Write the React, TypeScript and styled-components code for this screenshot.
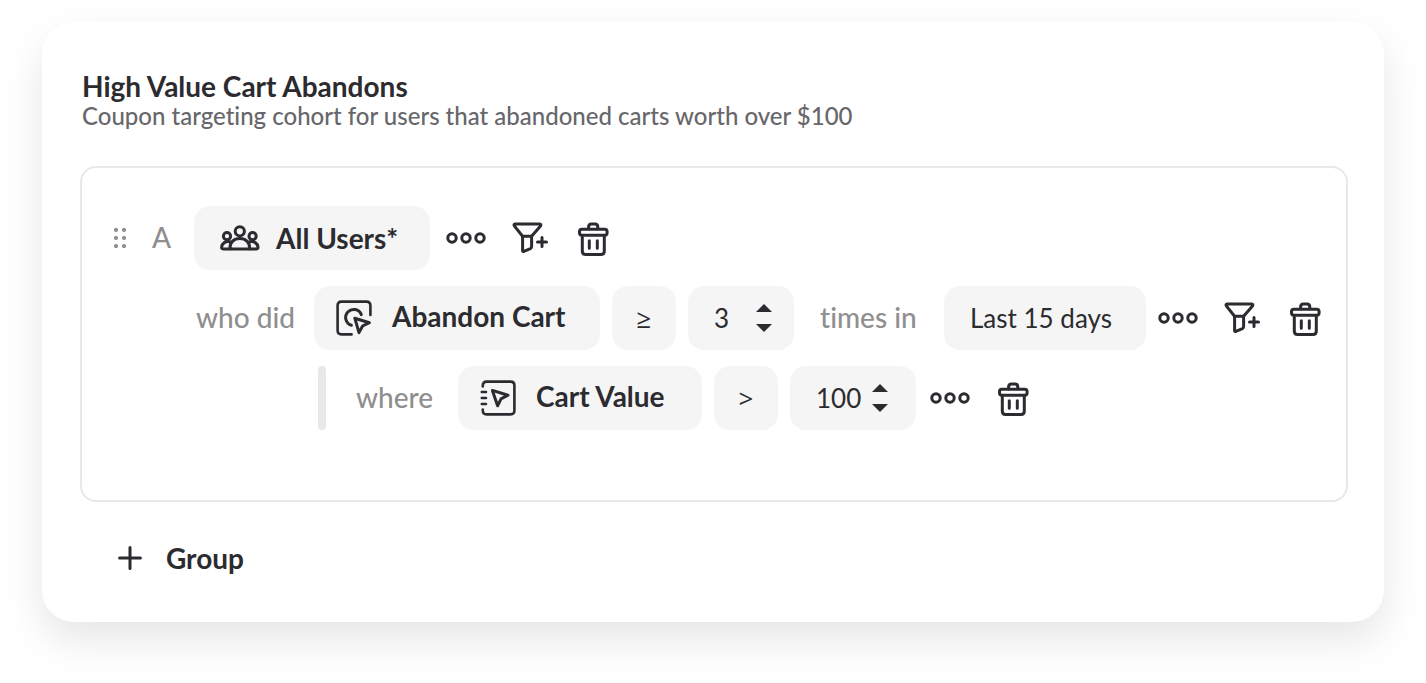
import React from "react";
import styled, { createGlobalStyle } from "styled-components";

const ink = "#2b2b30";

const GlobalStyle = createGlobalStyle`
  * { box-sizing: border-box; }
  body {
    margin: 0;
    background: #ffffff;
    color: ${ink};
    font-family: Lato, "Liberation Sans", sans-serif;
    font-variant-ligatures: none;
  }
  button, input { font: inherit; color: inherit; }
`;

const Page = styled.main`
  padding: 22px 42px 60px;
`;

const Card = styled.section`
  padding: 48px 36px 48px 38px;
  border-radius: 32px;
  background: #ffffff;
  box-shadow: 0 18px 40px rgba(0, 0, 0, 0.1);
`;

const Header = styled.header`
  padding-left: 2px;
`;

const Title = styled.h1`
  margin: 0;
  font-size: 28px;
  line-height: 32px;
  font-weight: 700;
`;

const Subtitle = styled.p`
  margin: 0;
  font-size: 24px;
  line-height: 28px;
  font-weight: 500;
  color: #67676b;
`;

const Panel = styled.div`
  display: flex;
  flex-direction: column;
  gap: 16px;
  margin-top: 36px;
  padding: 38px 20px 70px 30px;
  border: 2px solid #e8e8e8;
  border-radius: 16px;
`;

const Row = styled.div<{ $indent: number }>`
  display: flex;
  align-items: center;
  height: 64px;
  padding-left: ${(p) => p.$indent}px;
  white-space: nowrap;
`;

const Pills = styled.div`
  display: flex;
  gap: 12px;
`;

const Label = styled.span<{ $width: number; $before?: number }>`
  flex: none;
  width: ${(p) => p.$width}px;
  margin-left: ${(p) => p.$before ?? 0}px;
  padding-bottom: 2px;
  font-size: 28px;
  line-height: 32px;
  font-weight: 500;
  color: #8f8f8f;
`;

const Pill = styled.button<{ $width: number }>`
  display: flex;
  align-items: center;
  min-width: ${(p) => p.$width}px;
  height: 64px;
  padding: 0 26px;
  border: 0;
  border-radius: 16px;
  background: #f5f5f5;
  font-size: 26px;
  line-height: 32px;
  font-weight: 400;
  cursor: pointer;
`;

const CohortPill = styled(Pill)`
  gap: 16px;
  font-size: 28px;
  font-weight: 700;
`;

const EventPill = styled(CohortPill)`
  gap: 20px;
  padding: 0 22px;
`;

const PillText = styled.span`
  padding-bottom: 4px;
`;

const OperatorPill = styled(Pill)`
  justify-content: center;
  padding: 0;
  font-family: "Open Sans", "Liberation Sans", sans-serif;
  font-weight: 500;
`;

const NumberPill = styled.div<{ $wide?: boolean }>`
  display: flex;
  align-items: center;
  justify-content: space-between;
  height: 64px;
  padding: 0 ${(p) => (p.$wide ? 28 : 22)}px 0 26px;
  border-radius: 16px;
  background: #f5f5f5;
`;

const NumberInput = styled.input<{ $wide?: boolean }>`
  width: ${(p) => (p.$wide ? 56 : 42)}px;
  height: 32px;
  padding: 0;
  border: 0;
  background: transparent;
  font-size: 26px;
  line-height: 32px;
`;

const Stepper = styled.div`
  display: flex;
  flex-direction: column;
  gap: 12px;
`;

const StepButton = styled.button`
  display: flex;
  padding: 0;
  border: 0;
  background: transparent;
  cursor: pointer;
`;

const Actions = styled.div<{ $before: number }>`
  display: flex;
  gap: 24px;
  margin-left: ${(p) => p.$before}px;
`;

const IconButton = styled.button`
  display: flex;
  align-items: center;
  justify-content: center;
  width: 40px;
  height: 40px;
  padding: 0;
  border: 0;
  background: transparent;
  cursor: pointer;
`;

const Grip = styled.span`
  display: flex;
  width: 40px;
  padding-left: 2px;
  cursor: grab;
`;

const Rail = styled.span`
  flex: none;
  width: 8px;
  height: 64px;
  margin-right: 30px;
  border-radius: 4px;
  background: #e8e8e8;
`;

const AddGroup = styled.button`
  display: flex;
  align-items: center;
  gap: 24px;
  margin: 40px 0 0 38px;
  padding: 0;
  border: 0;
  background: transparent;
  font-size: 28px;
  line-height: 32px;
  font-weight: 700;
  cursor: pointer;
`;

const Svg = styled.svg.attrs({ "aria-hidden": true })`
  display: block;
  flex: none;
  fill: none;
  stroke: ${ink};
  stroke-width: 3;
  stroke-linecap: round;
  stroke-linejoin: round;
`;

const GripIcon = () => (
  <Svg width="12" height="20" viewBox="0 0 12 20">
    {[2, 10].map((x) =>
      [2, 10, 18].map((y) => <circle key={`${x}-${y}`} cx={x} cy={y} r="2.1" fill="#8f8f8f" stroke="none" />)
    )}
  </Svg>
);

const DotsIcon = () => (
  <Svg width="40" height="14" viewBox="0 0 40 14">
    <circle cx="6" cy="7" r="4.2" />
    <circle cx="20" cy="7" r="4.2" />
    <circle cx="34" cy="7" r="4.2" />
  </Svg>
);

const FilterIcon = () => (
  <Svg width="36" height="32" viewBox="0 0 36 32">
    <path d="M3.2 1.9H27.6Q29.6 2.2 28.5 3.9L19.6 14.2H10.6L2.3 3.9Q1.4 2.2 3.2 1.9Z" />
    <path d="M10.6 14.2V28.6Q10.7 29.8 11.9 29.4L18.4 26.6Q19.6 26 19.6 24.8V14.2" />
    <path d="M30 15.6V24.6M25.5 20.1H34.5" />
  </Svg>
);

const TrashIcon = () => (
  <Svg width="32" height="36" viewBox="0 0 32 36">
    <path d="M10.6 8.8V7Q10.6 4 13.4 4H17Q19.8 4 19.8 7V8.8" />
    <rect x="1.5" y="9.2" width="27.6" height="6" rx="2.4" />
    <path d="M4.3 15.4V31.2Q4.3 34.4 7.5 34.4H23.1Q26.3 34.4 26.3 31.2V15.4" />
    <path d="M11.3 20.8V28.2M19.3 20.8V28.2" />
  </Svg>
);

const UsersIcon = () => (
  <Svg width="40" height="26" viewBox="0 0 40 26">
    <circle cx="19.8" cy="6.3" r="4.6" />
    <circle cx="7" cy="11.2" r="3.6" />
    <circle cx="32.6" cy="11.2" r="3.6" />
    <path d="M10 23.8C9.4 17.6 13.8 13.6 19.8 13.6S30.2 17.6 29.6 23.8" />
    <path d="M10 16.8C5.6 15.8 2 18.2 1.6 22.2Q1.5 24 3.4 24H36.2Q38.1 24 38 22.2C37.6 18.2 34 15.8 29.6 16.8" />
  </Svg>
);

const EventIcon = () => (
  <Svg width="36" height="36" viewBox="0 0 36 36">
    <path strokeWidth="2.6" d="M34.4 15V5.4Q34.4 1.6 30.6 1.6H5.4Q1.6 1.6 1.6 5.4V30.6Q1.6 34.4 5.4 34.4H15.6" />
    <path d="M25.3 14.6A8.1 8.1 0 1 0 15.4 25.3" />
    <path d="M18.8 18.2L33.4 22.7L26.6 26L23 32.6Z" />
  </Svg>
);

const PropertyIcon = () => (
  <Svg width="36" height="36" viewBox="0 0 36 36">
    <path strokeWidth="2.6" d="M2.8 6.4V5.4Q2.8 1.6 6.6 1.6H30.6Q34.4 1.6 34.4 5.4V30.6Q34.4 34.4 30.6 34.4H6.6Q2.8 34.4 2.8 30.6V29.6" />
    <path strokeWidth="2.6" d="M1.8 12H6M1.8 18H6M1.8 24H6" />
    <path d="M12.4 10.4L28 15.2L21 18.8L17.6 25.8Z" />
  </Svg>
);

const CaretUp = () => (
  <Svg width="16" height="8" viewBox="0 0 16 8">
    <path d="M0 8L8 0L16 8Z" fill={ink} stroke="none" />
  </Svg>
);

const CaretDown = () => (
  <Svg width="16" height="8" viewBox="0 0 16 8">
    <path d="M0 0L8 8L16 0Z" fill={ink} stroke="none" />
  </Svg>
);

const PlusIcon = () => (
  <Svg width="24" height="24" viewBox="0 0 24 24">
    <path d="M12 1.6V22.4M1.6 12H22.4" />
  </Svg>
);

function NumberField({ label, value, wide }: { label: string; value: string; wide?: boolean }) {
  const [current, setCurrent] = React.useState(value);
  const step = (by: number) => setCurrent(String((Number(current) || 0) + by));
  return (
    <NumberPill $wide={wide}>
      <NumberInput
        $wide={wide}
        aria-label={label}
        inputMode="numeric"
        value={current}
        onChange={(e) => setCurrent(e.target.value)}
      />
      <Stepper>
        <StepButton aria-label="Increase" onClick={() => step(1)}><CaretUp /></StepButton>
        <StepButton aria-label="Decrease" onClick={() => step(-1)}><CaretDown /></StepButton>
      </Stepper>
    </NumberPill>
  );
}

function RowActions({ before, filter }: { before: number; filter?: boolean }) {
  return (
    <Actions $before={before}>
      <IconButton aria-label="More options"><DotsIcon /></IconButton>
      {filter && <IconButton aria-label="Add filter"><FilterIcon /></IconButton>}
      <IconButton aria-label="Delete"><TrashIcon /></IconButton>
    </Actions>
  );
}

export default function App() {
  return (
    <>
      <GlobalStyle />
      <Page>
        <Card>
          <Header>
            <Title>High Value Cart Abandons</Title>
            <Subtitle>Coupon targeting cohort for users that abandoned carts worth over $100</Subtitle>
          </Header>
          <Panel>
            <Row $indent={0}>
              <Grip><GripIcon /></Grip>
              <Label $width={42}>A</Label>
              <CohortPill $width={236}>
                <UsersIcon />
                All Users*
              </CohortPill>
              <RowActions before={16} filter />
            </Row>
            <Row $indent={84}>
              <Label $width={118}>who did</Label>
              <Pills>
                <EventPill $width={286}>
                  <EventIcon />
                  <PillText>Abandon Cart</PillText>
                </EventPill>
                <OperatorPill $width={64}>≥</OperatorPill>
                <NumberField label="Times" value="3" />
              </Pills>
              <Label $width={124} $before={26}>times in</Label>
              <Pill $width={202}>Last 15 days</Pill>
              <RowActions before={12} filter />
            </Row>
            <Row $indent={206}>
              <Rail />
              <Label $width={102}>where</Label>
              <Pills>
                <EventPill $width={244}>
                  <PropertyIcon />
                  <PillText>Cart Value</PillText>
                </EventPill>
                <OperatorPill $width={64}>&gt;</OperatorPill>
                <NumberField label="Value" value="100" wide />
              </Pills>
              <RowActions before={14} />
            </Row>
          </Panel>
          <AddGroup>
            <PlusIcon />
            Group
          </AddGroup>
        </Card>
      </Page>
    </>
  );
}
